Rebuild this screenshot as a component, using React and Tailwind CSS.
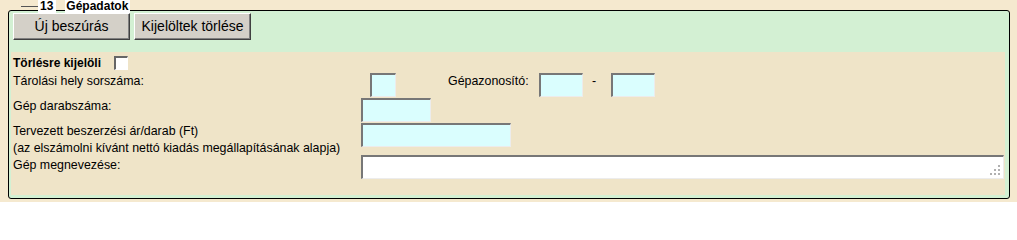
import React from "react";

const box =
  "h-[24px] bg-[#dafefe] border-t-2 border-l-2 border-r border-b border-t-[#777777] border-l-[#777777] border-r-[#ececec] border-b-[#ececec]";

function Btn({ children, w }) {
  return (
    <button
      className={`h-[27px] ${w} bg-[#d4d0c8] text-[14px] text-black border border-t-white border-l-white border-r-[#404040] border-b-[#404040] shadow-[inset_-1px_-1px_#808080]`}
    >
      {children}
    </button>
  );
}

function ResizeDots() {
  return (
    <svg className="absolute right-[2px] bottom-[2px]" width="11" height="11" viewBox="0 0 11 11">
      <rect x="8" y="0" width="2" height="2" fill="#b0b0b0" />
      <rect x="4" y="4" width="2" height="2" fill="#b0b0b0" />
      <rect x="8" y="4" width="2" height="2" fill="#b0b0b0" />
      <rect x="0" y="8" width="2" height="2" fill="#b0b0b0" />
      <rect x="4" y="8" width="2" height="2" fill="#b0b0b0" />
      <rect x="8" y="8" width="2" height="2" fill="#b0b0b0" />
    </svg>
  );
}

export default function App() {
  return (
    <div className="w-[1017px] h-[202px] bg-[#f5e9cf] pt-[10px] pl-[8px] font-['Liberation_Sans',Arial,sans-serif] text-black">
      <div className="relative w-[1002px] h-[189px] border border-black rounded-[3px] bg-[#d3f0d3] pt-[2px]">
        {/* legend */}
        <div className="absolute top-[-5px] left-[12px] w-[17px] h-px bg-[#555555]" />
        <div className="absolute top-[-11px] left-[29px] flex h-[13px] text-[12px] font-bold leading-[13px]">
          <span className="bg-white pl-[2px] pr-[3px]">13</span>
          <span className="w-[9px]" />
          <span className="bg-white pl-px pr-[2px]">Gépadatok</span>
        </div>

        <div className="flex gap-[4px] pl-[4px]">
          <Btn w="w-[117px]">Új beszúrás</Btn>
          <Btn w="w-[117px]">Kijelöltek törlése</Btn>
        </div>

        <div className="ml-[2px] mt-[12px] w-[994px] h-[143px] bg-[#efe4c8] pl-[2px] pt-px text-[12.4px]">
          <div className="flex items-center h-[20px]">
            <span className="font-bold text-[12px]">Törlésre kijelöli</span>
            <span className="ml-[13px] w-[14px] h-[14px] bg-white border-t-2 border-l-2 border-r border-b border-t-[#666666] border-l-[#666666] border-r-white border-b-white" />
          </div>

          <div className="flex items-start h-[25px]">
            <span className="w-[348px] leading-[17px]">Tárolási hely sorszáma:</span>
            <span className={`${box} ml-[9px] w-[26px]`} />
            <span className="ml-[52px] w-[91px] leading-[17px]">Gépazonosító:</span>
            <span className={`${box} w-[44px]`} />
            <span className="w-[28px] pl-[9px] leading-[17px]">-</span>
            <span className={`${box} w-[44px]`} />
          </div>

          <div className="flex items-start h-[25px]">
            <span className="w-[348px] leading-[17px]">Gép darabszáma:</span>
            <span className={`${box} w-[70px]`} />
          </div>

          <div className="flex items-start h-[32px]">
            <div className="w-[348px] leading-[17px]">
              <div>Tervezett beszerzési ár/darab (Ft)</div>
              <div>(az elszámolni kívánt nettó kiadás megállapításának alapja)</div>
            </div>
            <span className={`${box} w-[150px]`} />
          </div>

          <div className="flex items-start h-[24px]">
            <span className="w-[348px] pt-[2px] leading-[17px]">Gép megnevezése:</span>
            <div className="relative w-[643px] h-[24px] bg-white border-t-2 border-l-2 border-r border-b border-t-[#777777] border-l-[#777777] border-r-[#ececec] border-b-[#ececec]">
              <ResizeDots />
            </div>
          </div>
        </div>
      </div>
    </div>
  );
}
